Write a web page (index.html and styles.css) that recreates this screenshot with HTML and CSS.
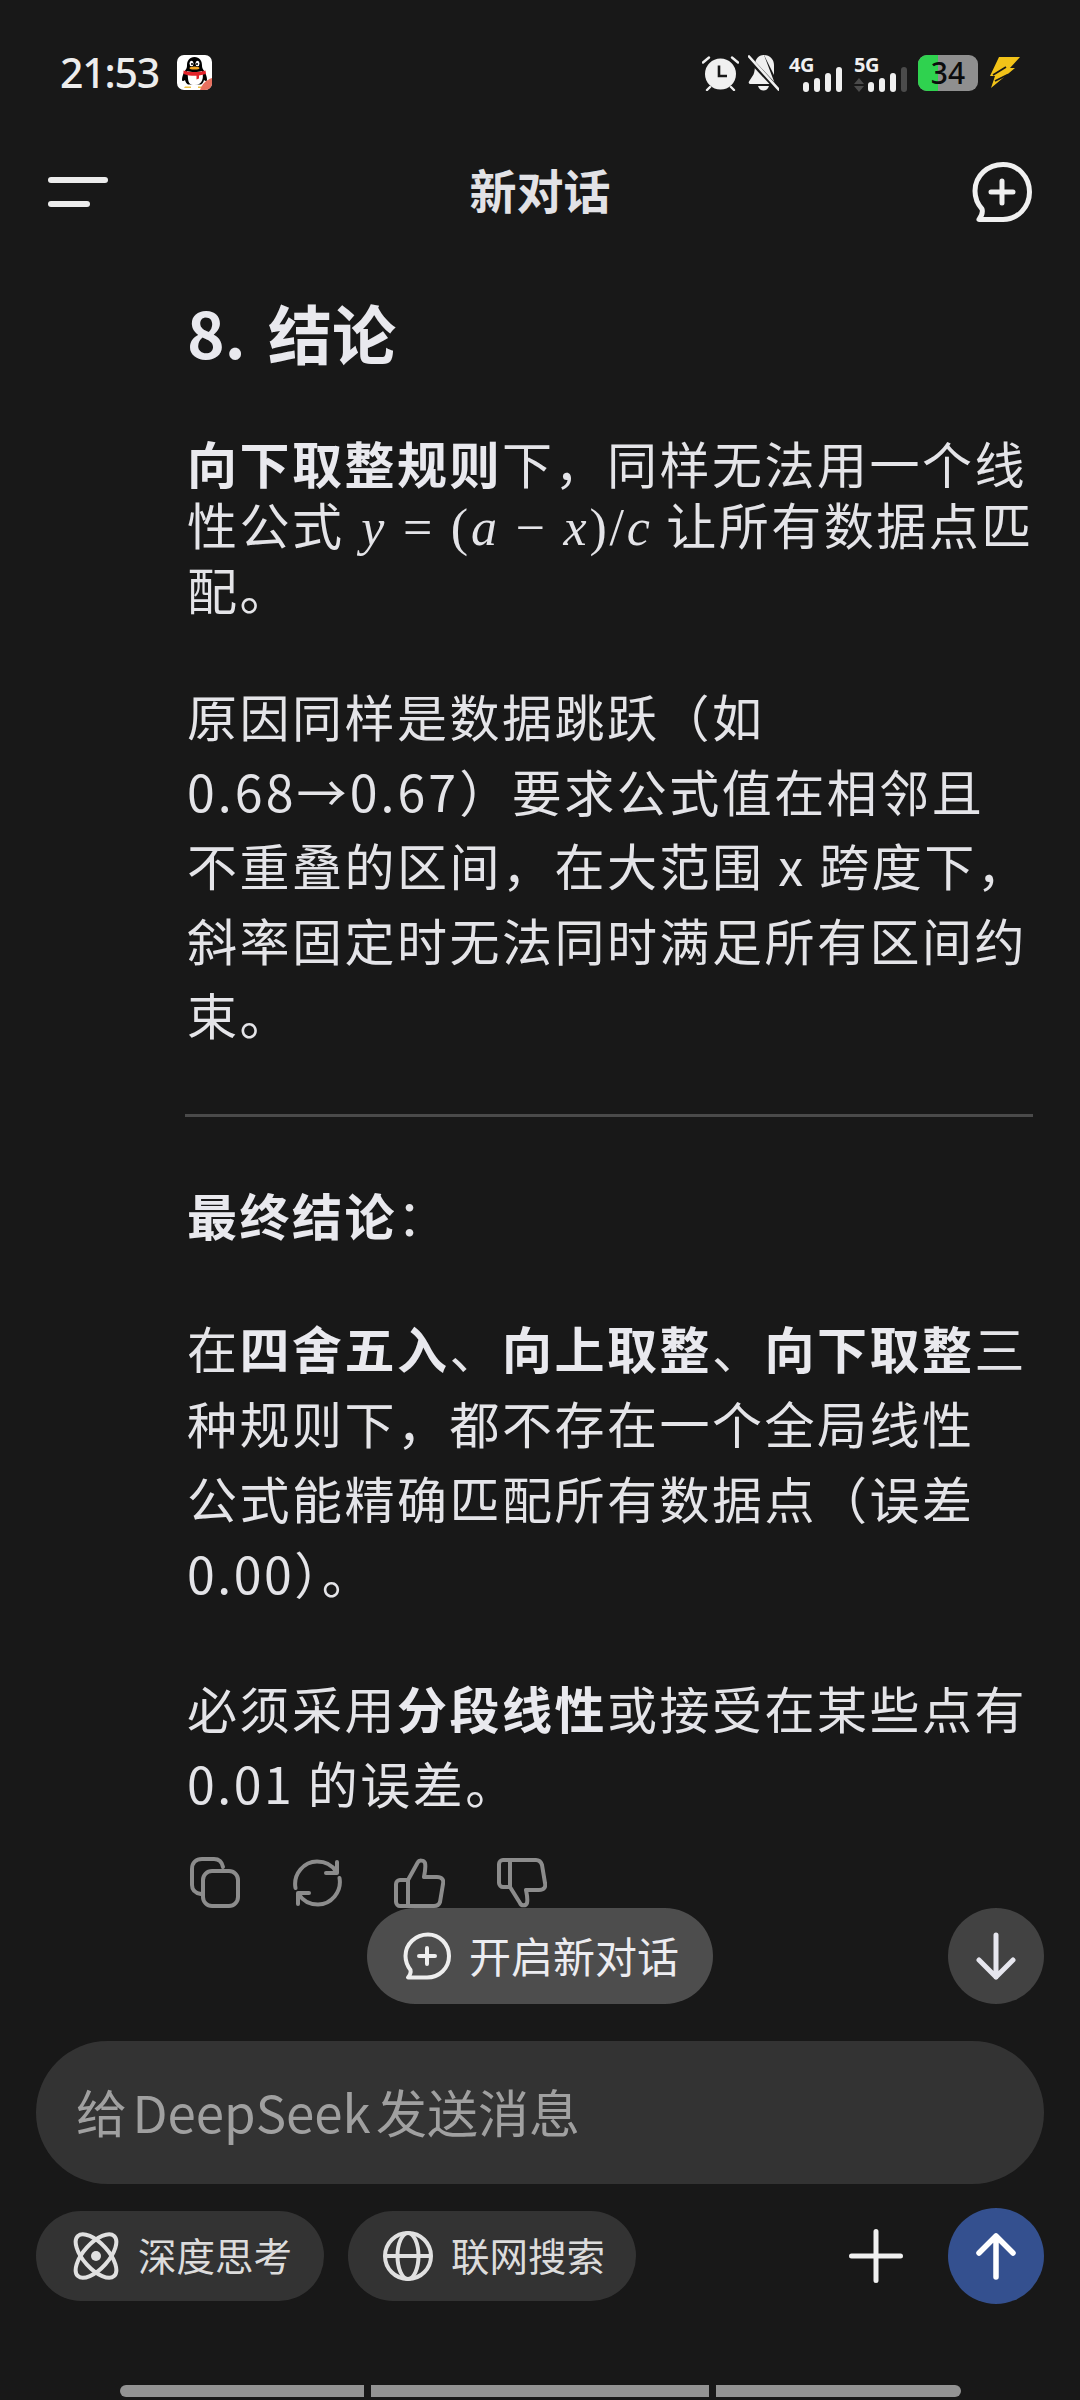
FILE: index.html
```html
<!DOCTYPE html>
<html lang="zh-CN">
<head>
<meta charset="utf-8">
<title>新对话</title>
<link rel="stylesheet" href="styles.css">
</head>
<body>
<div class="status">
  <span class="time">21:53</span>
  <svg class="qq" viewBox="0 0 35 35" width="35" height="35">
    <rect width="35" height="35" rx="7" fill="#fff"/>
    <path d="M17.5 2c-5 0-7.5 3.6-7.5 8.500 0 2-.5 3-1.500 4.500-2 3-3.500 6.500-3.500 9.500 0 2 1.500 2 3 .5.500 2 1.500 3.500 3 4.500h13c1.500-1 2.500-2.500 3-4.500 1.500 1.500 3 1.500 3-.5 0-3-1.500-6.500-3.500-9.500-1-1.500-1.500-2.500-1.500-4.500C25 5.600 22.500 2 17.500 2z" fill="#000"/>
    <path d="M10 16c2 6-1 14 7.500 14S27 22 25 16c-4 1.500-11 1.500-15 0z" fill="#fff"/>
    <path d="M6.500 15.500c7 2 15 2 22 0l.5 3.500-7 1.500v3l-2.500 1V20.800c-4 .2-9-.3-13-1.800z" fill="#e3232b"/>
    <ellipse cx="14.500" cy="8.500" rx="2" ry="2.700" fill="#fff"/>
    <ellipse cx="20.500" cy="8.500" rx="2" ry="2.700" fill="#fff"/>
    <circle cx="15" cy="9" r="1" fill="#000"/><circle cx="20" cy="9" r="1" fill="#000"/>
    <ellipse cx="17.500" cy="13" rx="5" ry="1.600" fill="#f5a623"/>
    <path d="M8 31.500h6v1.500H7zM21 31.500h6l1 1.500h-7z" fill="#f0c040"/>
    <path d="M35 23v5c0 4-3 7-7 7h-5c2-6 6-10 12-12z" fill="#e8705f"/>
  </svg>
  <div class="status-right">
    <svg class="st-alarm" viewBox="0 0 37 36" width="37" height="36">
      <circle cx="18.500" cy="19" r="15.500" fill="#f0f0f0"/>
      <path d="M17 10.500v10.500h8" fill="none" stroke="#181818" stroke-width="2.600"/>
      <path d="M1 7.500l6-5M36 7.500l-6-5M5 35l3-3M32 35l-3-3" stroke="#f0f0f0" stroke-width="2.400" stroke-linecap="round"/>
    </svg>
    <svg class="st-bell" viewBox="0 0 31 36" width="31" height="36">
      <path d="M16 0c-6 0-9 4.500-9 10 0 3-.5 7-1.500 9.500L1 26.500c-.5 1-.5 2 1 2.500h25z" fill="#f0f0f0"/>
      <path d="M10 31h11c-1 3-3 4.500-5.500 4.500S11 34 10 31zM16 0c6 0 10 4.500 10 10v10z" fill="#f0f0f0"/>
      <path d="M0.500 3l30 32" stroke="#181818" stroke-width="5"/>
      <path d="M1 1.500l29.500 33" stroke="#f0f0f0" stroke-width="2.600" stroke-linecap="round"/>
    </svg>
    <div class="net">
      <span class="net-label">4G</span>
      <div class="bars"><i class="b1"></i><i class="b2"></i><i class="b3"></i><i class="b4"></i></div>
    </div>
    <div class="net net-5g">
      <span class="net-label">5G</span>
      <svg class="updown" viewBox="0 0 10 14" width="10" height="14"><path d="M5 0l5 6H0zM5 14l5-6H0z" fill="#4b4b4b"/></svg>
      <div class="bars"><i class="b1"></i><i class="b2"></i><i class="b3"></i><i class="b4 dim"></i></div>
    </div>
    <div class="battery"><span class="battery-fill"></span><span class="battery-num">34</span></div>
    <svg class="bolt" viewBox="0 0 30 31" width="30" height="31">
      <path d="M9 0h21L20 11h5L1 31l4-12H0z" fill="#f2c318"/>
      <path d="M3 18l13-8M5 24l13-6.500" stroke="#181818" stroke-width="1.800"/>
    </svg>
  </div>
</div>

<header class="topbar">
  <div class="menu"><i class="menu-a"></i><i class="menu-b"></i></div>
  <h1 class="title">新对话</h1>
  <svg class="newchat" viewBox="0 0 60 60" width="60" height="60" fill="none" stroke="#f0f0f0" stroke-width="5" stroke-linecap="round" stroke-linejoin="round">
    <path d="M31 2.500C16 2.500 3 13.500 3 29c0 7 2.500 13 7 18 1 3-.5 7-3 10.500h24C46 57.500 57.500 45 57.500 30S46 2.500 31 2.500z"/>
    <path d="M30 19v22M19 30h22"/>
  </svg>
</header>

<main class="chat">
  <article class="answer">
    <h2 class="h8">8. 结论</h2>
    <p class="p-tight"><strong>向下取整规则</strong>下，同样无法用一个线<br>性公式 <span class="math"><em>y</em> = (<em>a</em> − <em>x</em>)/<em>c</em></span> 让所有数据点匹<br>配。</p>
    <p class="p-cause">原因同样是数据跳跃（如<br><span class="num">0.68→0.67</span>）要求公式值在相邻且<br>不重叠的区间，在大范围 x 跨度下，<br>斜率固定时无法同时满足所有区间约<br>束。</p>
    <hr class="rule">
    <p class="p-gap"><strong>最终结论</strong>：</p>
    <p class="p-gap2">在<strong>四舍五入</strong>、<strong>向上取整</strong>、<strong>向下取整</strong>三<br>种规则下，都不存在一个全局线性<br>公式能精确匹配所有数据点（误差<br>0.00）。</p>
    <p class="p-gap">必须采用<strong>分段线性</strong>或接受在某些点有<br>0.01 的误差。</p>
    <div class="actions">
      <svg class="act a-copy" viewBox="0 0 50 51" width="50" height="51" fill="none" stroke="#8c8c8c" stroke-width="4" stroke-linejoin="round" stroke-linecap="round">
        <path d="M11 37C5 36 2 33 2 28V12C2 6 6 2 12 2h12c5 0 8 3 9 8"/>
        <rect x="13" y="14" width="35" height="35" rx="9"/>
      </svg>
      <svg class="act a-redo" viewBox="0 0 49 48" width="49" height="48" fill="none" stroke="#8c8c8c" stroke-width="4" stroke-linejoin="round" stroke-linecap="round">
        <path d="M2.500 29C0 15 11 2.500 24 2.500c8 0 15 3.500 19 10"/>
        <path d="M46.500 19C49 33 38 45.500 25 45.500c-8 0-15-3.500-19-10"/>
        <path d="M44 3v11H33M5 45V34h11"/>
      </svg>
      <svg class="act a-up" viewBox="0 0 51 50" width="51" height="50" fill="none" stroke="#8c8c8c" stroke-width="4" stroke-linejoin="round" stroke-linecap="round">
        <path d="M14 22 24 4c1-2 6-2 7 1 1 4 0 9-1 14h13c5 0 7 3 6 7l-3 18c-1 3-3 4-6 4H14z"/>
        <path d="M14 22H6c-2 0-4 2-4 4v18c0 2 2 4 4 4h8"/>
      </svg>
      <svg class="act a-down" viewBox="0 0 50 50" width="50" height="50" fill="none" stroke="#8c8c8c" stroke-width="4" stroke-linejoin="round" stroke-linecap="round">
        <path d="M13 29l10 16c1 3 6 3 7 0 1-4 0-8-1-13h13c5 0 7-3 6-7L45 7c-1-3-3-5-6-5H13z"/>
        <path d="M13 29H6c-2 0-4-2-4-4V6c0-2 2-4 4-4h7"/>
      </svg>
    </div>
  </article>
  <div class="pill">
    <svg viewBox="0 0 48 48" width="48" height="48" fill="none" stroke="#eeeeee" stroke-width="4" stroke-linecap="round" stroke-linejoin="round">
      <path d="M25 2.500C12.500 2.500 2.500 12 2.500 24c0 5 2 10 5 14 .5 2-.5 5-2.500 7.500h19C36.500 45.500 46 36 46 24S36.500 2.500 25 2.500z"/>
      <path d="M24 16v16M16 24h16"/>
    </svg>
    <span class="pill-text">开启新对话</span>
  </div>
  <div class="down">
    <svg viewBox="0 0 40 48" width="40" height="48" fill="none" stroke="#e6e6ee" stroke-width="5" stroke-linecap="round" stroke-linejoin="round">
      <path d="M20 3v42M3 28l17 17 17-17"/>
    </svg>
  </div>
</main>

<footer class="composer">
  <div class="input">给 DeepSeek 发送消息</div>
  <div class="tools">
    <div class="chip">
      <svg viewBox="0 0 48 48" width="48" height="48" fill="none" stroke="#e0e0e0" stroke-width="4">
        <ellipse cx="24" cy="24" rx="12.500" ry="27" transform="rotate(-42 24 24)"/>
        <ellipse cx="24" cy="24" rx="12.500" ry="27" transform="rotate(42 24 24)"/>
        <circle cx="24" cy="24" r="5" fill="#e0e0e0" stroke="none"/>
      </svg>
      <span class="chip-text">深度思考</span>
    </div>
    <div class="chip chip-web">
      <svg viewBox="0 0 50 50" width="50" height="50" fill="none" stroke="#e0e0e0" stroke-width="4">
        <circle cx="25" cy="25" r="23"/>
        <ellipse cx="25" cy="25" rx="10.500" ry="23"/>
        <path d="M2 25h46"/>
      </svg>
      <span class="chip-text">联网搜索</span>
    </div>
    <svg class="plus" viewBox="0 0 54 54" width="54" height="54" fill="none" stroke="#f0f0f0" stroke-width="5" stroke-linecap="round">
      <path d="M27 2.500v49M2.500 27h49"/>
    </svg>
    <div class="send">
      <svg viewBox="0 0 40 47" width="40" height="47" fill="none" stroke="#ffffff" stroke-width="5.500" stroke-linecap="round" stroke-linejoin="round">
        <path d="M20 44V3M3 20 20 3l17 17"/>
      </svg>
    </div>
  </div>
  <div class="homebar"><i class="seg seg-a"></i><i class="seg seg-b"></i><i class="seg seg-c"></i></div>
</footer>
</body>
</html>
```

FILE: styles.css
```css
* { box-sizing: border-box; }
html, body { margin: 0; padding: 0; }
body {
  width: 1080px;
  height: 2400px;
  background: #181818;
  color: #e4e4e8;
  font-family: "Noto Sans CJK SC", "Noto Sans", sans-serif;
  display: flex;
  flex-direction: column;
  overflow: hidden;
}

/* status bar */
.status {
  height: 144px;
  flex: none;
  display: flex;
  align-items: center;
  padding-left: 60px;
}
.time {
  font-family: "Noto Sans", sans-serif;
  font-size: 41px;
  font-weight: 500;
  color: #ededed;
  line-height: 1;
  width: 117px;
  letter-spacing: -1.2px;
}
.qq { flex: none; }
.status-right {
  position: absolute;
  left: 702px;
  top: 55px;
  display: flex;
  align-items: flex-start;
}
.st-bell { margin-left: 9px; }
.net {
  width: 53px;
  height: 37px;
  margin-left: 10px;
  position: relative;
}
.net-5g { margin-left: 12px; }
.net-label {
  position: absolute;
  left: 0;
  top: 0;
  font-family: "Noto Sans", sans-serif;
  font-weight: 700;
  font-size: 20px;
  line-height: 20px;
  letter-spacing: -0.5px;
  color: #f0f0f0;
}
.bars {
  position: absolute;
  right: 0;
  bottom: 0;
  display: flex;
  align-items: flex-end;
  gap: 5px;
}
.bars i {
  display: block;
  width: 6px;
  background: #f0f0f0;
  border-radius: 3px;
}
.bars .b1 { height: 10px; }
.bars .b2 { height: 14px; }
.bars .b3 { height: 19px; }
.bars .b4 { height: 25px; }
.bars .dim { background: #4b4b4b; }
.updown { position: absolute; left: 0; bottom: 0; }
.battery {
  width: 60px;
  height: 36px;
  margin-left: 11px;
  background: #8f8f8f;
  border-radius: 9px;
  position: relative;
  display: flex;
  align-items: center;
  justify-content: center;
}
.battery-fill {
  position: absolute;
  left: 0;
  top: 0;
  bottom: 0;
  width: 20px;
  background: #2fd24f;
  border-radius: 9px 0 0 9px;
}
.battery-num {
  position: relative;
  font-family: "Noto Sans", sans-serif;
  font-weight: 500;
  font-size: 30px;
  line-height: 1;
  color: #0c0c0c;
}
.bolt { margin-left: 12px; margin-top: 2px; }

/* top bar */
.topbar {
  height: 96px;
  flex: none;
  display: flex;
  align-items: center;
  justify-content: space-between;
  padding: 0 48px;
  position: relative;
}
.menu { width: 60px; }
.menu i {
  display: block;
  height: 6px;
  background: #ececec;
  border-radius: 3px;
}
.menu-a { width: 60px; }
.menu-b { width: 42px; margin-top: 18px; }
.title {
  position: absolute;
  left: 0;
  right: 0;
  top: 20px;
  margin: 0;
  text-align: center;
  font-size: 47px;
  font-weight: 700;
  line-height: 50px;
  color: #e2e2e6;
}
.newchat { flex: none; }

/* answer */
.chat {
  flex: 1;
  position: relative;
  overflow: hidden;
  padding-left: 187px;
}
.answer { width: 850px; }
.answer strong { font-weight: 700; color: #e9e9ee; }
.answer p {
  margin: 0;
  font-size: 50px;
  letter-spacing: 2.500px;
  line-height: 75px;
  white-space: nowrap;
}
.h8 {
  margin: 46px 0 0;
  font-size: 64px;
  line-height: 90px;
  font-weight: 700;
  letter-spacing: 0;
  word-spacing: 8px;
  color: #e9e9ee;
}
.answer .p-tight { margin-top: 56px; line-height: 61px; }
.answer .p-cause { margin-top: 59px; line-height: 74.500px; }
.answer .p-gap { margin-top: 60px; }
.answer .p-gap2 { margin-top: 58px; }
.num { letter-spacing: 3.100px; }
.math {
  font-family: "Liberation Serif", serif;
  font-size: 52px;
  letter-spacing: 2.800px;
  margin-left: 3px;
  font-weight: 400;
}
.rule {
  margin: 63px 0 0 -2px;
  width: 848px;
  height: 3px;
  border: 0;
  background: #4a4a4a;
}
.actions {
  margin-top: 37px;
  display: flex;
  align-items: flex-start;
}
.act { flex: none; display: block; }
.a-copy { margin-left: 3px; }
.a-redo { margin-left: 53px; margin-top: 2px; }
.a-up { margin-left: 52px; margin-top: 1px; }
.a-down { margin-left: 52px; margin-top: 1px; }

/* floating controls */
.pill {
  position: absolute;
  left: 367px;
  bottom: 37px;
  width: 346px;
  height: 96px;
  border-radius: 48px;
  background: #4d4d4d;
  display: flex;
  align-items: center;
  padding-left: 36px;
  gap: 18px;
}
.pill-text {
  font-size: 42px;
  letter-spacing: 0;
  color: #ececf0;
  line-height: 1;
  margin-top: -2px;
}
.down {
  position: absolute;
  right: 36px;
  bottom: 37px;
  width: 96px;
  height: 96px;
  border-radius: 50%;
  background: #424242;
  display: flex;
  align-items: center;
  justify-content: center;
}

/* composer */
.composer {
  flex: none;
  height: 359px;
  padding: 0 36px;
  display: flex;
  flex-direction: column;
}
.input {
  height: 143px;
  flex: none;
  width: 1008px;
  border-radius: 72px;
  background: #333333;
  padding: 0 0 4px 40px;
  display: flex;
  align-items: center;
  font-size: 51px;
  color: #a0a0a0;
  white-space: pre;
  word-spacing: -6px;
}
.tools {
  margin-top: 27px;
  height: 90px;
  flex: none;
  display: flex;
  align-items: center;
}
.chip {
  width: 288px;
  height: 90px;
  flex: none;
  border-radius: 45px;
  background: #333333;
  display: flex;
  align-items: center;
  padding-left: 36px;
  gap: 18px;
  margin-right: 24px;
  font-size: 38.500px;
  color: #dcdcdc;
}
.chip-text { margin-top: -4px; }
.chip-web { padding-left: 35px; }
.chip svg { flex: none; }
.plus { margin-left: 189px; flex: none; }
.send {
  width: 96px;
  height: 96px;
  flex: none;
  margin-left: 45px;
  border-radius: 50%;
  background: #34508f;
  display: flex;
  align-items: center;
  justify-content: center;
}
.homebar {
  margin-top: 84px;
  margin-left: 84px;
  display: flex;
  gap: 7px;
}
.seg {
  display: block;
  height: 12px;
  background: #939393;
}
.seg-a { width: 244px; border-radius: 6px 0 0 6px; }
.seg-b { width: 338px; }
.seg-c { width: 245px; border-radius: 0 6px 6px 0; }
```
